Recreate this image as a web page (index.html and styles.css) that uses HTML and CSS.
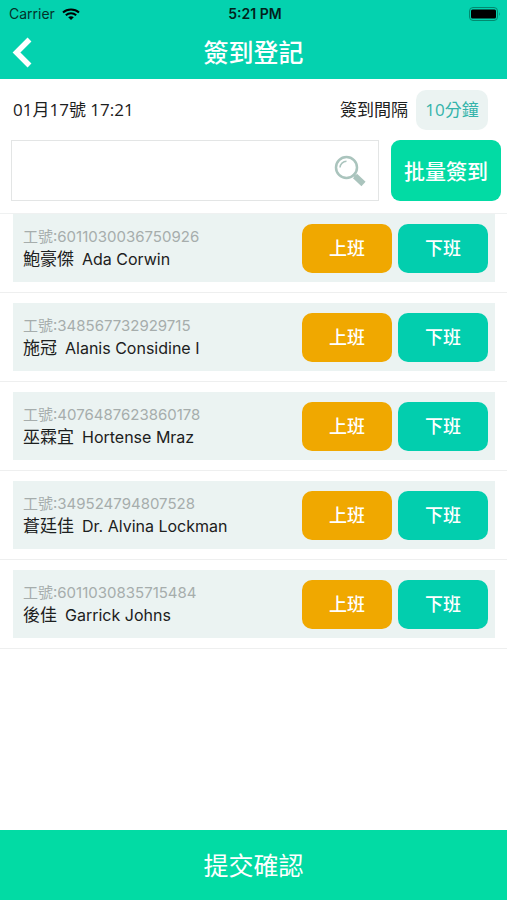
FILE: index.html
```html
<!DOCTYPE html>
<html lang="zh-Hant">
<head>
<meta charset="utf-8">
<meta name="viewport" content="width=device-width, initial-scale=1">
<title>簽到登記</title>
<link rel="stylesheet" href="styles.css">
</head>
<body>
<header class="header">
  <div class="status">
    <div class="carrier">
      <span>Carrier</span>
      <svg class="wifi" viewBox="0 0 18 12" aria-hidden="true">
        <path d="M1 4.400C5.400 .4 12.600 .4 17 4.400M3.800 7.300c3-2.700 7.400-2.700 10.400 0" fill="none" stroke="currentColor" stroke-width="2"/>
        <path d="M9 12 6.200 9.300c1.600-1.300 4-1.300 5.600 0z" fill="currentColor"/>
      </svg>
    </div>
    <time class="clock">5:21 PM</time>
    <svg class="battery" viewBox="0 0 32 14" aria-hidden="true">
      <rect x=".5" y=".5" width="28" height="13" rx="3.5" fill="none" stroke="#02896f"/>
      <rect x="2" y="2.5" width="25" height="9" rx="1.5" fill="#000"/>
      <path d="M30 5q1.6 2 0 4z" fill="#02896f"/>
    </svg>
  </div>
  <div class="nav">
    <button class="back" type="button" aria-label="返回">
      <svg class="chevron" viewBox="0 0 20 32" aria-hidden="true"><path d="M17.5 3.5 4.5 16.5l13 13" fill="none" stroke="#fff" stroke-width="5.5"/></svg>
    </button>
    <h1 class="title">簽到登記</h1>
  </div>
</header>
<main class="main">
  <div class="info">
    <time class="date">01月17號 17:21</time>
    <span class="interval">簽到間隔</span>
    <button class="minutes" type="button">10分鐘</button>
  </div>
  <form class="tools">
    <div class="search">
      <input class="query" type="text" aria-label="搜尋">
      <button class="find" type="button" aria-label="搜尋">
        <svg class="glass" viewBox="0 0 32 32" aria-hidden="true">
          <circle cx="12.5" cy="12.5" r="10.5" fill="none" stroke="#aac4bd" stroke-width="2.5"/>
          <path d="M6 12.5A6.5 6.5 0 0 1 12.5 6.300" fill="none" stroke="#aac4bd" stroke-width="1.5"/>
          <path d="m19 19 3 3" stroke="#aac4bd" stroke-width="2"/>
          <path d="m21 21 8.500 8" stroke="#aac4bd" stroke-width="6"/>
        </svg>
      </button>
    </div>
    <button class="batch" type="button">批量簽到</button>
  </form>
  <ul class="list">
    <li class="row"><div class="card"><div class="person"><p class="number">工號:6011030036750926</p><p class="name">鮑豪傑<span class="latin">Ada Corwin</span></p></div><button class="shift on" type="button">上班</button><button class="shift off" type="button">下班</button></div></li>
    <li class="row"><div class="card"><div class="person"><p class="number">工號:348567732929715</p><p class="name">施冠<span class="latin">Alanis Considine I</span></p></div><button class="shift on" type="button">上班</button><button class="shift off" type="button">下班</button></div></li>
    <li class="row"><div class="card"><div class="person"><p class="number">工號:4076487623860178</p><p class="name">巫霖宜<span class="latin">Hortense Mraz</span></p></div><button class="shift on" type="button">上班</button><button class="shift off" type="button">下班</button></div></li>
    <li class="row"><div class="card"><div class="person"><p class="number">工號:349524794807528</p><p class="name">蒼廷佳<span class="latin">Dr. Alvina Lockman</span></p></div><button class="shift on" type="button">上班</button><button class="shift off" type="button">下班</button></div></li>
    <li class="row"><div class="card"><div class="person"><p class="number">工號:6011030835715484</p><p class="name">後佳<span class="latin">Garrick Johns</span></p></div><button class="shift on" type="button">上班</button><button class="shift off" type="button">下班</button></div></li>
  </ul>
</main>
<button class="submit" type="button">提交確認</button>
</body>
</html>
```
FILE: styles.css
```css
* {
  box-sizing: border-box;
}

body {
  margin: 0;
  min-height: 100vh;
  display: flex;
  flex-direction: column;
  background: #fff;
  color: #1c2020;
  font-family: Inter, "Noto Sans CJK TC", sans-serif;
}

button {
  border: 0;
  padding: 0 0 2px;
  color: #fff;
  font-family: inherit;
  font-weight: 500;
  cursor: pointer;
}

h1, p, ul {
  margin: 0;
  padding: 0;
}

.header {
  background: #04d2af;
}

.status {
  display: grid;
  grid-template-columns: 1fr auto 1fr;
  align-items: center;
  height: 27px;
  padding: 0 6px 0 9px;
  color: #03322a;
  font-size: 14px;
}

.carrier {
  display: flex;
  align-items: center;
  gap: 7px;
}

.wifi {
  width: 18px;
  height: 12px;
  color: #000;
}

.clock {
  color: #02221c;
  font-weight: 600;
}

.battery {
  width: 32px;
  height: 14px;
  justify-self: end;
}

.nav {
  display: grid;
  grid-template-columns: 48px 1fr 48px;
  align-items: center;
  height: 52px;
}

.back {
  height: 52px;
  padding-left: 12px;
  background: none;
  text-align: left;
}

.chevron {
  display: block;
  width: 20px;
  height: 32px;
}

.title {
  color: #fff;
  font-size: 25px;
  font-weight: 500;
  line-height: 48px;
  text-align: center;
}

.main {
  flex: 1;
}

.info {
  display: flex;
  align-items: center;
  height: 61px;
  padding: 0 19px 0 13px;
  font-family: "Open Sans", "Noto Sans CJK TC", sans-serif;
  font-size: 17px;
}

.date,
.interval {
  padding-bottom: 2px;
}

.interval {
  margin-left: auto;
}

.minutes {
  width: 72px;
  height: 40px;
  margin-left: 8px;
  border-radius: 10px;
  background: #ebf3f2;
  color: #35b3ab;
  font-size: 17px;
  font-weight: 400;
}

.tools {
  display: flex;
  gap: 12px;
  padding: 0 6px 12px 11px;
}

.search {
  flex: 1;
  display: flex;
  height: 61px;
  border: 1px solid #e3e5e5;
}

.query {
  flex: 1;
  min-width: 0;
  padding: 0 12px;
  border: 0;
  background: none;
  font: inherit;
  outline: 0;
}

.find {
  padding: 0 12px;
  background: none;
}

.glass {
  display: block;
  width: 32px;
  height: 32px;
}

.batch {
  width: 110px;
  height: 61px;
  border-radius: 9px;
  background: #02dba4;
  font-size: 21px;
}

.list {
  border-top: 1px solid #eff1f1;
  list-style: none;
}

.row {
  padding: 10px 12px 10px 13px;
  border-bottom: 1px solid #eeefef;
}

.row:first-child {
  padding-top: 0;
}

.card {
  display: flex;
  align-items: center;
  gap: 6px;
  height: 68px;
  padding: 0 7px 0 10px;
  background: #ebf3f2;
}

.person {
  flex: 1;
  padding-top: 2px;
}

.number {
  color: #a6adac;
  font-size: 15px;
  line-height: 20px;
}

.name {
  font-size: 17px;
  line-height: 24px;
}

.latin {
  margin-left: 8px;
  font-size: 16px;
}

.shift {
  width: 90px;
  height: 49px;
  border-radius: 10px;
  font-size: 18px;
}

.on {
  background: #f0a800;
}

.off {
  background: #02ceae;
}

.submit {
  height: 70px;
  background: #02dba4;
  font-size: 25px;
  font-weight: 400;
}
```
